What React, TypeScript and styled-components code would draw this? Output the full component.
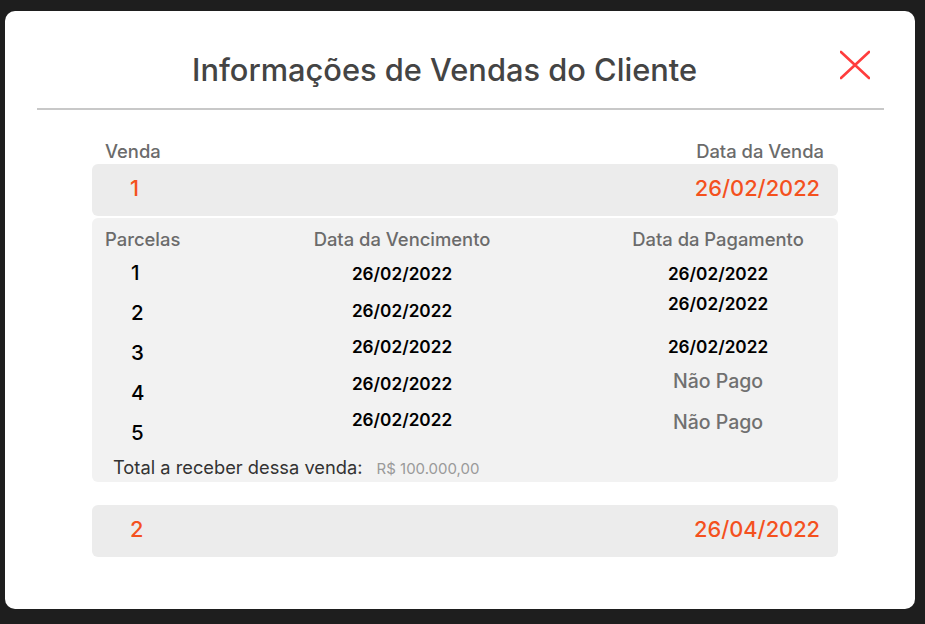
import React from "react"
import styled, { createGlobalStyle } from "styled-components"

interface Parcela {
  numero: number
  vencimento: string
  pagamento: string | null
  offset: number
}

interface Venda {
  id: number
  data: string
  parcelas: Parcela[]
  total: string
}

const GlobalStyle = createGlobalStyle`
  html, body {
    margin: 0;
    padding: 0;
    background-color: #1e1e1e;
    font-family: "Inter", "Noto Sans", sans-serif;
  }
  * {
    box-sizing: border-box;
  }
`

const Modal = styled.div`
  margin: 11px 0 0 5px;
  width: 910px;
  height: 598px;
  background-color: #ffffff;
  border-radius: 10px;
  display: flex;
  flex-direction: column;
`

const Header = styled.header`
  display: flex;
  align-items: flex-start;
  padding: 41px 45px 0 187px;
`

const Title = styled.h1`
  margin: 0;
  font-size: 30.8px;
  line-height: 36px;
  font-weight: 500;
  color: #444444;
`

const CloseButton = styled.button`
  margin: -2px 0 0 auto;
  padding: 0;
  width: 30px;
  height: 30px;
  border: none;
  background: none;
  cursor: pointer;
`

const Divider = styled.hr`
  margin: 20px 31px 0 32px;
  height: 2px;
  border: none;
  background-color: #c8c8c8;
`

const Content = styled.main`
  display: flex;
  flex-direction: column;
  padding: 31px 77px 0 87px;
`

const LabelRow = styled.div`
  display: flex;
  justify-content: space-between;
  padding: 0 14px 0 13px;
  margin-bottom: 3px;
`

const Label = styled.span`
  font-size: 18.4px;
  line-height: 20px;
  font-weight: 500;
  color: #6b6b6b;
`

const SaleRow = styled.div<{ $spaced?: boolean }>`
  display: flex;
  align-items: center;
  justify-content: space-between;
  height: 52px;
  padding: 0 18px 4px 38px;
  margin-top: ${(props) => (props.$spaced ? "23px" : "0")};
  background-color: #ececec;
  border-radius: 6px;
`

const SaleValue = styled.span`
  font-size: 21.8px;
  line-height: 44px;
  font-weight: 500;
  color: #f4511e;
`

const Details = styled.section`
  margin-top: 2px;
  padding: 11px 0 3px 13px;
  background-color: #f2f2f2;
  border-radius: 6px;
`

const Grid = styled.div`
  display: grid;
  grid-template-columns: 103px 388px 244px;
`

const HeadCell = styled.span<{ $center?: boolean }>`
  font-size: 18.4px;
  line-height: 20px;
  font-weight: 500;
  color: #6b6b6b;
  text-align: ${(props) => (props.$center ? "center" : "left")};
`

const Column = styled.div<{ $top: number }>`
  display: flex;
  flex-direction: column;
  padding-top: ${(props) => props.$top}px;
`

const Number = styled.span`
  padding-left: 26px;
  font-size: 20.5px;
  line-height: 40px;
  font-weight: 500;
  color: #000000;
`

const DueDate = styled.span`
  text-align: center;
  font-size: 17.2px;
  line-height: 36.5px;
  font-weight: 600;
  color: #000000;
`

const PaidCell = styled.span<{ $paid: boolean }>`
  text-align: center;
  font-size: ${(props) => (props.$paid ? "17.2px" : "19.5px")};
  line-height: 30px;
  font-weight: ${(props) => (props.$paid ? 600 : 500)};
  color: ${(props) => (props.$paid ? "#000000" : "#707070")};
`

const TotalLine = styled.div`
  display: flex;
  align-items: baseline;
  gap: 14px;
  margin-top: 4px;
  padding-left: 8px;
  line-height: 20px;
`

const TotalLabel = styled.span`
  font-size: 18.3px;
  color: #333333;
`

const TotalValue = styled.span`
  font-size: 15px;
  color: #9a9a9a;
`

const vendas: Venda[] = [
  {
    id: 1,
    data: "26/02/2022",
    total: "R$ 100.000,00",
    parcelas: [
      { numero: 1, vencimento: "26/02/2022", pagamento: "26/02/2022", offset: 0 },
      { numero: 2, vencimento: "26/02/2022", pagamento: "26/02/2022", offset: 0 },
      { numero: 3, vencimento: "26/02/2022", pagamento: "26/02/2022", offset: 13 },
      { numero: 4, vencimento: "26/02/2022", pagamento: null, offset: 4 },
      { numero: 5, vencimento: "26/02/2022", pagamento: null, offset: 11 },
    ],
  },
  { id: 2, data: "26/04/2022", total: "", parcelas: [] },
]

const CloseIcon = (): JSX.Element => (
  <svg width="30" height="30" viewBox="0 0 30 30">
    <path
      d="M1 2 L29 28 M29 2 L1 28"
      stroke="#ff3d3d"
      strokeWidth="2.6"
      strokeLinecap="round"
    />
  </svg>
)

const App = (): JSX.Element => {
  const [aberta, ...outras] = vendas

  return (
    <>
      <GlobalStyle />
      <Modal>
        <Header>
          <Title>Informações de Vendas do Cliente</Title>
          <CloseButton aria-label="Fechar">
            <CloseIcon />
          </CloseButton>
        </Header>
        <Divider />
        <Content>
          <LabelRow>
            <Label>Venda</Label>
            <Label>Data da Venda</Label>
          </LabelRow>
          <SaleRow>
            <SaleValue>{aberta.id}</SaleValue>
            <SaleValue>{aberta.data}</SaleValue>
          </SaleRow>
          <Details>
            <Grid>
              <HeadCell>Parcelas</HeadCell>
              <HeadCell $center>Data da Vencimento</HeadCell>
              <HeadCell $center>Data da Pagamento</HeadCell>
              <Column $top={4}>
                {aberta.parcelas.map((p) => (
                  <Number key={p.numero}>{p.numero}</Number>
                ))}
              </Column>
              <Column $top={7}>
                {aberta.parcelas.map((p) => (
                  <DueDate key={p.numero}>{p.vencimento}</DueDate>
                ))}
              </Column>
              <Column $top={10}>
                {aberta.parcelas.map((p) => (
                  <PaidCell
                    key={p.numero}
                    $paid={p.pagamento !== null}
                    style={{ marginTop: p.offset }}
                  >
                    {p.pagamento ?? "Não Pago"}
                  </PaidCell>
                ))}
              </Column>
            </Grid>
            <TotalLine>
              <TotalLabel>Total a receber dessa venda:</TotalLabel>
              <TotalValue>{aberta.total}</TotalValue>
            </TotalLine>
          </Details>
          {outras.map((v) => (
            <SaleRow key={v.id} $spaced>
              <SaleValue>{v.id}</SaleValue>
              <SaleValue>{v.data}</SaleValue>
            </SaleRow>
          ))}
        </Content>
      </Modal>
    </>
  )
}

export default App
